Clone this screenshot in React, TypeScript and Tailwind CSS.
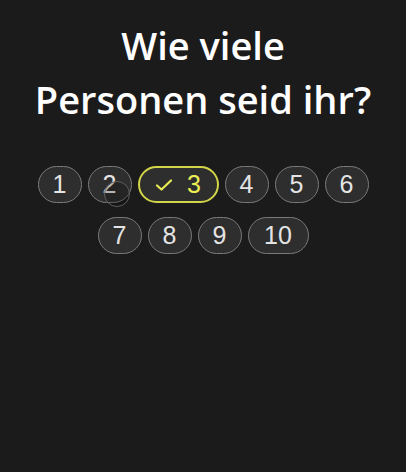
import React from 'react';

const options = [1, 2, 3, 4, 5, 6, 7, 8, 9, 10];
const selected = 3;

function Check() {
  return (
    <svg width="18" height="14" viewBox="0 0 18 14" fill="none" className="mr-[14px]">
      <path d="M2 7.5 L6.5 11.5 L16 2.5" stroke="#e9eb52" strokeWidth="2.2" strokeLinecap="round" strokeLinejoin="round" />
    </svg>
  );
}

export default function App() {
  return (
    <div className="relative min-h-[472px] w-[406px] bg-[#1b1b1b] pt-[18px]">
      <h1 className="text-center font-['Open_Sans',sans-serif] text-[38px] font-semibold leading-[54px] text-white">
        Wie viele
        <br />
        Personen seid ihr?
      </h1>

      <div className="mx-auto mt-[40px] flex w-[340px] flex-wrap justify-center gap-x-[6px] gap-y-[14px] font-['Liberation_Sans',Arial,sans-serif]">
        {options.map((n) => {
          const isSel = n === selected;
          const width = isSel ? 'w-[81px]' : n === 10 ? 'w-[61px]' : 'w-[44px]';
          return (
            <button
              key={n}
              className={`flex h-[37px] items-center justify-center rounded-full bg-[#2e2e2e] text-[25px] leading-none ${width} ${
                isSel ? 'border-2 border-[#d3d548] text-[#ecee55]' : 'border border-[#7a7a7a] text-[#e4e4e4]'
              }`}
            >
              {isSel && <Check />}
              {n}
            </button>
          );
        })}
      </div>

      {/* touch indicator */}
      <div className="pointer-events-none absolute left-[104px] top-[181px] h-[26px] w-[26px] rounded-full border border-[#5e5e5e] bg-[#000000]/20" />
    </div>
  );
}
